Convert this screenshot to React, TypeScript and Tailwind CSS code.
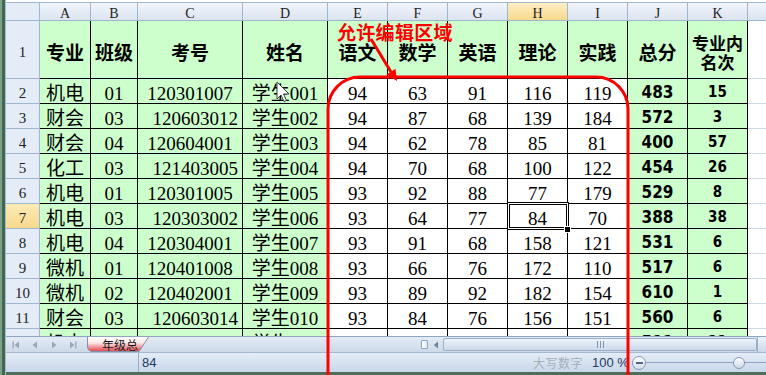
import React from 'react'

type Rec = {
  major: string
  cls: string
  id: string
  right: boolean
  name: string
  s: number[]
  total: number
  rank: number
}

const rows: Rec[] = [
  { major: '机电', cls: '01', id: '120301007', right: false, name: '学生001', s: [94, 63, 91, 116, 119], total: 483, rank: 15 },
  { major: '财会', cls: '03', id: '120603012', right: true, name: '学生002', s: [94, 87, 68, 139, 184], total: 572, rank: 3 },
  { major: '财会', cls: '04', id: '120604001', right: false, name: '学生003', s: [94, 62, 78, 85, 81], total: 400, rank: 57 },
  { major: '化工', cls: '03', id: '121403005', right: true, name: '学生004', s: [94, 70, 68, 100, 122], total: 454, rank: 26 },
  { major: '机电', cls: '01', id: '120301005', right: false, name: '学生005', s: [93, 92, 88, 77, 179], total: 529, rank: 8 },
  { major: '机电', cls: '03', id: '120303002', right: true, name: '学生006', s: [93, 64, 77, 84, 70], total: 388, rank: 38 },
  { major: '机电', cls: '04', id: '120304001', right: false, name: '学生007', s: [93, 91, 68, 158, 121], total: 531, rank: 6 },
  { major: '微机', cls: '01', id: '120401008', right: false, name: '学生008', s: [93, 66, 76, 172, 110], total: 517, rank: 6 },
  { major: '微机', cls: '02', id: '120402001', right: false, name: '学生009', s: [93, 89, 92, 182, 154], total: 610, rank: 1 },
  { major: '财会', cls: '03', id: '120603014', right: true, name: '学生010', s: [93, 84, 76, 156, 151], total: 560, rank: 6 },
  { major: '机电', cls: '03', id: '120303001', right: true, name: '学生011', s: [93, 80, 74, 135, 129], total: 511, rank: 21 },
]

const COLS = ['A', 'B', 'C', 'D', 'E', 'F', 'G', 'H', 'I', 'J', 'K']
const HEADS = ['专业', '班级', '考号', '姓名', '语文', '数学', '英语', '理论', '实践', '总分']

const cjk = "[font-family:'Noto_Sans_CJK_SC',sans-serif]"
const ser = "[font-family:'Liberation_Serif','Noto_Sans_CJK_SC',serif]"
const fat = "[font-family:'DejaVu_Sans_Condensed','DejaVu_Sans',sans-serif] [font-stretch:condensed] font-bold"
const ui = "[font-family:'Liberation_Sans','Noto_Sans_CJK_SC',sans-serif]"

const cell = 'flex items-center overflow-hidden whitespace-nowrap border-r border-b border-black text-black'
const hdr = 'flex items-center justify-center border-r border-b border-[#9eb6ce] text-[#222]'

function Sheet() {
  return (
    <div className="h-[333px] overflow-hidden bg-white">
      <div className="grid grid-cols-[34px_51px_47px_105px_85px_60px_60px_60px_60px_60px_60px_60px_18px] grid-rows-[18px_58px_repeat(11,25px)]">
        {/* column letters */}
        <div className={`${hdr} bg-[#e4ecf7]`} />
        {COLS.map((c) => (
          <div
            key={c}
            className={`${hdr} pt-[5px] text-[14px] leading-none ${ser} ${
              c === 'H' ? 'bg-linear-to-b from-[#fdefc4] to-[#f8d98c]' : 'bg-linear-to-b from-[#f2f6fb] to-[#dbe4f0]'
            }`}
          >
            {c}
          </div>
        ))}
        <div className="border-b border-[#9eb6ce] bg-linear-to-b from-[#f2f6fb] to-[#dbe4f0]" />

        {/* row 1: headings */}
        <div className={`${hdr} bg-[#e4ecf7] pt-[5px] text-[15px] leading-none ${ser}`}>1</div>
        {HEADS.map((h) => (
          <div key={h} className={`${cell} justify-center bg-[#ccffcc] pt-[4px] text-[19px] font-bold leading-none ${cjk}`}>
            {h}
          </div>
        ))}
        <div className={`${cell} flex-col justify-center bg-[#ccffcc] pt-[5px] text-[17px] font-bold leading-[19px] ${cjk}`}>
          <span>专业内</span>
          <span>名次</span>
        </div>
        <div className="border-b border-[#d0d7e5] bg-white" />

        {rows.map((r, i) => {
          const n = i + 2
          return (
            <React.Fragment key={n}>
              <div
                className={`${hdr} pt-[5px] text-[15px] leading-none ${ser} ${
                  n === 7 ? 'bg-linear-to-b from-[#fcebb6] to-[#f8d98c]' : 'bg-[#e4ecf7]'
                }`}
              >
                {n}
              </div>
              <div className={`${cell} justify-center bg-[#ccffcc] text-[19px] leading-none ${cjk}`}>{r.major}</div>
              <div className={`${cell} justify-center bg-[#ccffcc] pt-[5px] text-[19px] leading-none ${ser}`}>{r.cls}</div>
              <div
                className={`${cell} bg-[#ccffcc] pt-[5px] text-[19px] leading-none ${ser} ${
                  r.right ? 'justify-end pr-[4px]' : 'justify-center'
                }`}
              >
                {r.id}
              </div>
              <div className={`${cell} justify-center bg-[#ccffcc] pt-[5px] text-[19px] leading-none ${ser}`}>{r.name}</div>
              {r.s.map((v, k) => (
                <div key={k} className={`${cell} justify-center bg-white pt-[5px] text-[19px] leading-none ${ser}`}>
                  {v}
                </div>
              ))}
              <div className={`${cell} justify-center bg-[#ccffcc] pt-[2px] text-[17px] leading-none ${fat}`}>{r.total}</div>
              <div className={`${cell} justify-center bg-[#ccffcc] pt-[2px] text-[15px] leading-none ${fat}`}>{r.rank}</div>
              <div className="border-b border-[#d0d7e5] bg-white" />
            </React.Fragment>
          )
        })}
      </div>
    </div>
  )
}

function NavIcon({ kind }: { kind: 'first' | 'prev' | 'next' | 'last' }) {
  return (
    <svg width="8" height="8" viewBox="0 0 8 8" fill="#97a6bb">
      {kind === 'first' && (
        <>
          <rect x="0.5" y="0.5" width="1.3" height="7" />
          <path d="M7 0.5 L2.5 4 L7 7.5 Z" />
        </>
      )}
      {kind === 'prev' && <path d="M6 0.5 L1.5 4 L6 7.5 Z" />}
      {kind === 'next' && <path d="M2 0.5 L6.5 4 L2 7.5 Z" />}
      {kind === 'last' && (
        <>
          <path d="M1 0.5 L5.5 4 L1 7.5 Z" />
          <rect x="6.2" y="0.5" width="1.3" height="7" />
        </>
      )}
    </svg>
  )
}

function TabBar() {
  return (
    <div className="flex h-[16px] items-stretch border-t border-[#8ea4c0] bg-linear-to-b from-[#e4ebf5] to-[#cdd9e8]">
      <div className="flex w-[76px] items-center">
        {(['first', 'prev', 'next', 'last'] as const).map((k) => (
          <div key={k} className="flex w-[19px] justify-center">
            <NavIcon kind={k} />
          </div>
        ))}
      </div>
      <div className="relative ml-[5px] h-[15px] w-[62px]">
        <svg className="absolute inset-0" width="62" height="15" viewBox="0 0 62 15">
          <defs>
            <linearGradient id="tabfill" x1="0" y1="0" x2="0" y2="1">
              <stop offset="0" stopColor="#ffffff" />
              <stop offset="0.4" stopColor="#fbe6e6" />
              <stop offset="1" stopColor="#e3434a" />
            </linearGradient>
          </defs>
          <path d="M0.5 0 L0.5 10 Q1 14.5 6 14.5 L52 14.5 L61.5 0" fill="url(#tabfill)" stroke="#7f93ae" strokeWidth="1" />
        </svg>
        <span className={`relative flex h-full items-center pl-[15px] text-[12px] leading-none text-[#1b1b1b] ${cjk}`}>年级总</span>
      </div>
      <div className="flex-1" />
      <div className="my-[3px] w-[7px] rounded-[1px] border border-[#8fa3bf] bg-linear-to-r from-[#ffffff] to-[#dfe7f2]" />
      <div className="ml-[1px] flex w-[14px] items-center justify-center">
        <svg width="6" height="8" viewBox="0 0 6 8">
          <path d="M5 0.5 L0.8 4 L5 7.5 Z" fill="#6f82a0" />
        </svg>
      </div>
      <div className="my-[1px] flex w-[314px] items-center justify-center rounded-[2px] border border-[#9aaec8] bg-linear-to-b from-[#eef3fa] to-[#ccd8e9]">
        <div className="flex gap-[2px]">
          <span className="h-[7px] w-[1px] bg-[#7f93b0]" />
          <span className="h-[7px] w-[1px] bg-[#7f93b0]" />
          <span className="h-[7px] w-[1px] bg-[#7f93b0]" />
        </div>
      </div>
      <div className="w-[9px] border-l border-[#9aaec8] bg-linear-to-b from-[#eef3fa] to-[#ccd8e9]" />
    </div>
  )
}

function StatusBar() {
  return (
    <div className={`flex h-[20px] items-center border-t border-[#a7b9d0] bg-linear-to-b from-[#e4ecf7] to-[#c9d7ea] ${ui}`}>
      <div className="w-[132px]" />
      <div className="flex h-full items-center border-l border-[#9aaec8] pl-[3px] text-[13px] text-[#1f3a63]">84</div>
      <div className="flex-1" />
      <div className={`w-[50px] whitespace-nowrap text-[12px] tracking-[0.5px] text-[#a6aeba] ${cjk}`}>大写数字</div>
      <div className="ml-[9px] w-[37px] whitespace-nowrap text-[13px] text-[#233a5e]">100 %</div>
      <div className="ml-[3px] flex h-[14px] w-[14px] items-center justify-center rounded-full border border-[#8497b4] bg-linear-to-b from-[#ffffff] to-[#d3ddea]">
        <span className="h-[2px] w-[7px] bg-[#4f6686]" />
      </div>
      <div className="relative flex h-full w-[120px] items-center">
        <div className="h-[1px] w-full bg-[#8da2bf]" />
        <div className="absolute left-[87px] top-[4px] h-[12px] w-[12px] rounded-full border border-[#8497b4] bg-linear-to-b from-[#ffffff] to-[#cfd9e7]" />
      </div>
    </div>
  )
}

function Overlay() {
  return (
    <>
      <div className={`absolute left-[337px] top-[22px] text-[19px] font-bold leading-[19px] tracking-[0.3px] text-[#ff0000] ${cjk}`}>
        允许编辑区域
      </div>
      <div className="absolute left-[507px] top-[202px] h-[28px] w-[62px] border border-black shadow-[inset_0_0_0_1px_#ffffff,inset_0_0_0_2px_#000000]" />
      <div className="absolute left-[564px] top-[226px] h-[7px] w-[7px] border border-white bg-black" />
      <svg className="pointer-events-none absolute left-0 top-0" width="766" height="375" viewBox="0 0 766 375">
        <path d="M328 380 L328 109 A32 32 0 0 1 360 77 L596 77 A32 32 0 0 1 628 109 L628 380" fill="none" stroke="#ff0000" strokeWidth="3" />
        <line x1="371" y1="39" x2="391" y2="72" stroke="#ff0000" strokeWidth="3" />
        <path d="M397 81 L386.5 74.5 L395.5 68.8 Z" fill="#ff0000" />
        <path
          d="M277 82 L277 99 L281 95 L284 101.5 L286.5 100.5 L283.5 94 L289 94 Z"
          fill="#ffffff"
          stroke="#3a3a3a"
          strokeWidth="1"
          strokeLinejoin="round"
        />
      </svg>
    </>
  )
}

export default function App() {
  return (
    <div className="relative flex h-[375px] w-[766px] overflow-hidden bg-white">
      <div className="flex w-[6px] shrink-0">
        <div className="w-[2px] bg-[#7e9f8a]" />
        <div className="w-[3px] bg-[#3d6a50]" />
        <div className="w-[1px] bg-[#a9b9cb]" />
      </div>
      <div className="flex min-w-0 flex-1 flex-col">
        <div className="h-[3px] border-b border-[#a5b6cc] bg-white" />
        <Sheet />
        <TabBar />
        <StatusBar />
        <div className="h-[3px] bg-[#4f6d5d]" />
      </div>
      <Overlay />
    </div>
  )
}
